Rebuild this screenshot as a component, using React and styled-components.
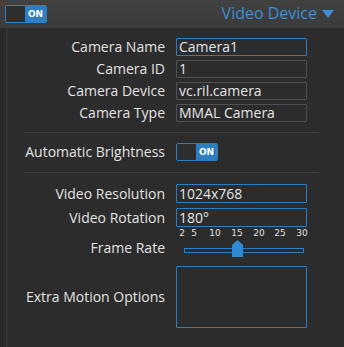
import React from "react";
import styled, { createGlobalStyle } from "styled-components";

const Global = createGlobalStyle`
  html, body { margin: 0; padding: 0; background: #2c2c2c; }
  * { box-sizing: border-box; }
  body { font-family: "Open Sans", "DejaVu Sans", sans-serif; }
`;

const Page = styled.div`
  width: 344px;
  height: 347px;
  display: flex;
  flex-direction: column;
  background: #2c2c2c;
  overflow: hidden;
`;

const TopBar = styled.div`
  height: 28px;
  flex: none;
  display: flex;
  align-items: center;
  justify-content: space-between;
  padding: 0 10px 0 5px;
  background: linear-gradient(#414141, #3b3b3b);
`;

const Title = styled.div`
  color: #3a8fd6;
  font-size: 16px;
  display: flex;
  align-items: center;
  gap: 5px;
  margin-top: -2px;
`;

const Caret = styled.span`
  width: 0;
  height: 0;
  border-left: 6px solid transparent;
  border-right: 6px solid transparent;
  border-top: 8px solid #3a8fd6;
  margin-top: 2px;
`;

const Body = styled.div`
  flex: 1;
  display: flex;
`;

const Strip = styled.div`
  width: 7px;
  flex: none;
  background: #292929;
  border-right: 1px solid #3d3d3d;
`;

const Content = styled.div`
  flex: 1;
  padding-top: 10px;
  display: flex;
  flex-direction: column;
`;

const Group = styled.div`
  display: flex;
  flex-direction: column;
  gap: ${p => p.$gap ?? 4}px;
`;

const Row = styled.div`
  display: grid;
  grid-template-columns: 158px 131px;
  column-gap: 11px;
  align-items: center;
  min-height: 18px;
  margin-top: ${p => p.$mt ?? 0}px;
`;

const Label = styled.div`
  text-align: right;
  color: #e2e2e2;
  font-size: 14px;
  line-height: 18px;
  white-space: nowrap;
  margin-top: ${p => p.$mt ?? 0}px;
`;

const Input = styled.div`
  height: ${p => p.$h ?? 18}px;
  border: 1px solid ${p => (p.$active ? "#2a7ec2" : "#505050")};
  border-radius: 1px;
  color: #e4e4e4;
  font-size: 14px;
  line-height: ${p => (p.$h ?? 18) - 2}px;
  padding: 0 2px;
  background: transparent;
  white-space: nowrap;
`;

const Sep = styled.div`
  height: 1px;
  background: #3c3c3c;
  margin: ${p => p.$m} 25px ${p => p.$m} 17px;
`;

const ToggleBox = styled.div`
  width: 42px;
  height: 18px;
  border: 1px solid #2f80c2;
  border-radius: 2px;
  display: flex;
  overflow: hidden;
`;

const ToggleOff = styled.div`
  flex: 1;
  background: #2e2e2e;
`;

const ToggleOn = styled.div`
  width: 21px;
  background: #2f7fc0;
  color: #fff;
  font-size: 9px;
  font-weight: 700;
  display: flex;
  align-items: center;
  justify-content: center;
  font-family: "DejaVu Sans", sans-serif;
`;

const Toggle = () => (
  <ToggleBox>
    <ToggleOff />
    <ToggleOn>ON</ToggleOn>
  </ToggleBox>
);

const SliderWrap = styled.div`
  display: flex;
  flex-direction: column;
  padding-top: 1px;
`;

const Ticks = styled.div`
  position: relative;
  height: 11px;
  font-size: 9px;
  color: #e0e0e0;
  font-family: "DejaVu Sans", sans-serif;
`;

const Tick = styled.span`
  position: absolute;
  top: 0;
  transform: translateX(-50%);
  line-height: 11px;
`;

const TrackArea = styled.div`
  position: relative;
  height: 19px;
`;

const Track = styled.div`
  position: absolute;
  left: 8px;
  width: 120px;
  top: 9px;
  height: 5px;
  border: 1px solid #2f7fc0;
  background: #2b2b2b;
`;

const Thumb = styled.svg`
  position: absolute;
  left: 56px;
  top: 1px;
`;

const TextArea = styled(Input)`
  height: 62px;
`;

const ticks = [
  [2, 6], [5, 18], [10, 39], [15, 61], [20, 83], [25, 104], [30, 126],
];

export default function App() {
  return (
    <Page>
      <Global />
      <TopBar>
        <Toggle />
        <Title>
          Video Device
          <Caret />
        </Title>
      </TopBar>
      <Body>
        <Strip />
        <Content>
          <Group>
            <Row>
              <Label>Camera Name</Label>
              <Input $active>Camera1</Input>
            </Row>
            <Row>
              <Label>Camera ID</Label>
              <Input>1</Input>
            </Row>
            <Row>
              <Label>Camera Device</Label>
              <Input>vc.ril.camera</Input>
            </Row>
            <Row>
              <Label>Camera Type</Label>
              <Input>MMAL Camera</Input>
            </Row>
          </Group>
          <Sep $m="10px" />
          <Row>
            <Label>Automatic Brightness</Label>
            <Toggle />
          </Row>
          <Sep $m="11px" />
          <Group $gap={5}>
            <Row>
              <Label>Video Resolution</Label>
              <Input $active $h={19}>1024x768</Input>
            </Row>
            <Row>
              <Label>Video Rotation</Label>
              <Input $active $h={19}>180°</Input>
            </Row>
          </Group>
          <Row>
            <Label $mt={10}>Frame Rate</Label>
            <SliderWrap>
              <Ticks>
                {ticks.map(([v, x]) => (
                  <Tick key={v} style={{ left: x }}>{v}</Tick>
                ))}
              </Ticks>
              <TrackArea>
                <Track />
                <Thumb width="11" height="17" viewBox="0 0 11 17">
                  <path d="M5.5 0 L11 5 L11 17 L0 17 L0 5 Z" fill="#2f8ad6" />
                </Thumb>
              </TrackArea>
            </SliderWrap>
          </Row>
          <Row $mt={8}>
            <Label>Extra Motion Options</Label>
            <TextArea $active />
          </Row>
        </Content>
      </Body>
    </Page>
  );
}
